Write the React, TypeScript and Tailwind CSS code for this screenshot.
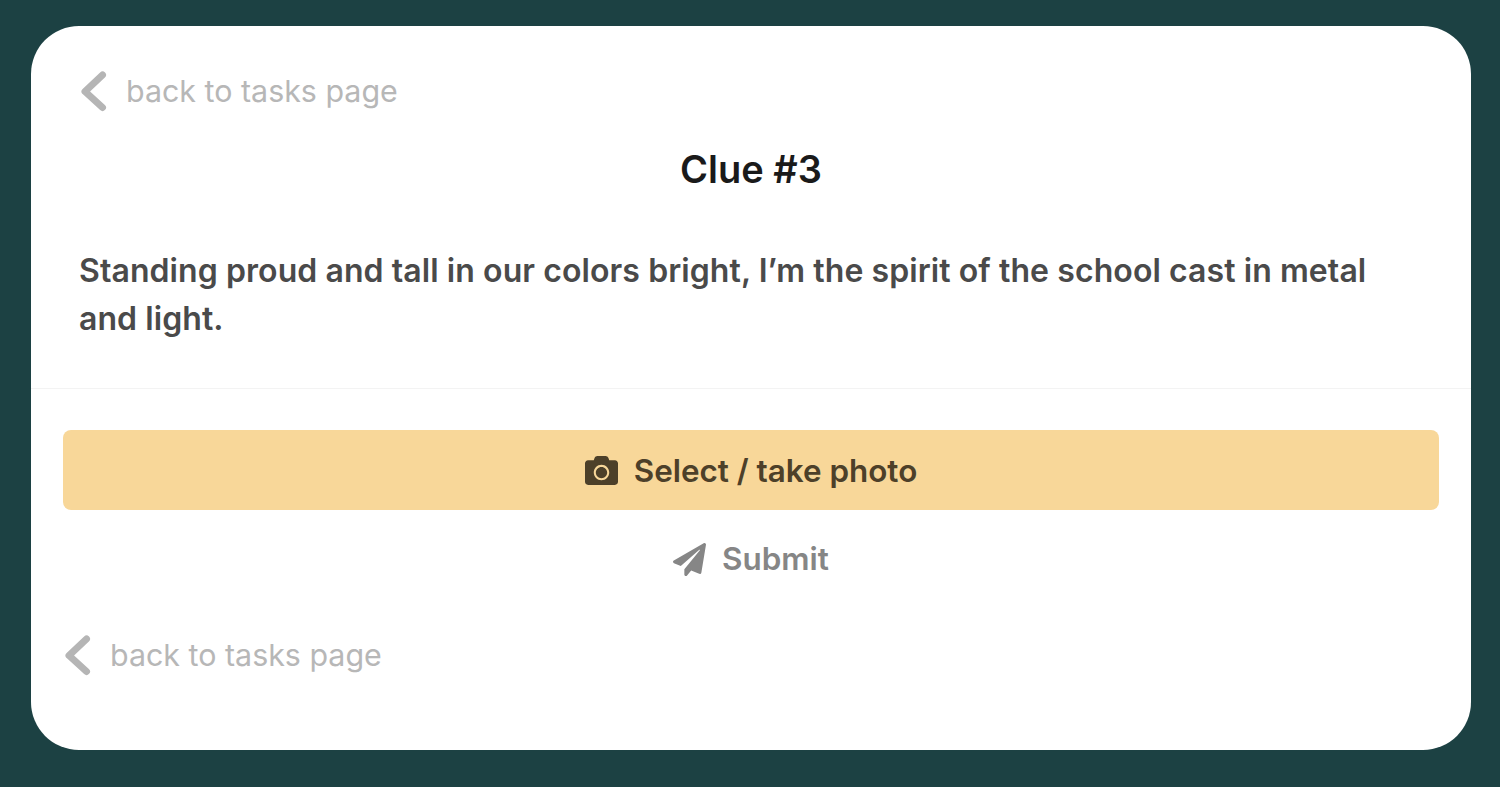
import { FaCamera, FaPaperPlane } from 'react-icons/fa';

function BackLink() {
  return (
    <a className="flex items-center h-[40px] text-[30.4px] text-[#b7b7b7]">
      <svg width="28" height="42" viewBox="0 0 28 42" fill="none" className="shrink-0">
        <path d="M23.5 4 L6 20.5 L23.5 36.5" stroke="#b5b5b5" strokeWidth="7" strokeLinecap="round" strokeLinejoin="round" />
      </svg>
      <span className="ml-[19px] leading-[40px] pb-[2px]">back to tasks page</span>
    </a>
  );
}

export default function App() {
  return (
    <div className="h-[787px] bg-[#1c4143] pt-[26px] px-[31px] font-['Inter','Noto_Sans',sans-serif] overflow-hidden">
      <div className="h-[724px] w-[1440px] bg-white rounded-[48px]">
        <div className="h-[363px] border-b border-[#f3f3f3] px-[48px] pt-[46px]">
          <BackLink />
          <h1 className="mt-[34px] text-center text-[38px] leading-[46px] font-semibold text-[#1a1a1a]">Clue #3</h1>
          <p className="mt-[55px] text-[32px] tracking-[0.08px] leading-[48px] font-semibold text-[#4a4a4a]">
            Standing proud and tall in our colors bright, I’m the spirit of the school cast in metal and light.
          </p>
        </div>
        <div className="px-[32px] pt-[41px]">
          <button className="flex items-center justify-center w-full h-[80px] rounded-[8px] bg-[#f8d799] text-[#4d4029] text-[31.4px] font-semibold">
            <FaCamera className="w-[33px] h-[33px]" />
            <span className="ml-[16px] pt-[3px]">Select / take photo</span>
          </button>
          <button className="flex items-center justify-center w-full h-[80px] mt-[9px] text-[#868686] text-[31.4px] font-semibold">
            <FaPaperPlane className="w-[33px] h-[33px]" />
            <span className="ml-[16px] pt-[2px]">Submit</span>
          </button>
          <div className="mt-[37px]">
            <BackLink />
          </div>
        </div>
      </div>
    </div>
  );
}
